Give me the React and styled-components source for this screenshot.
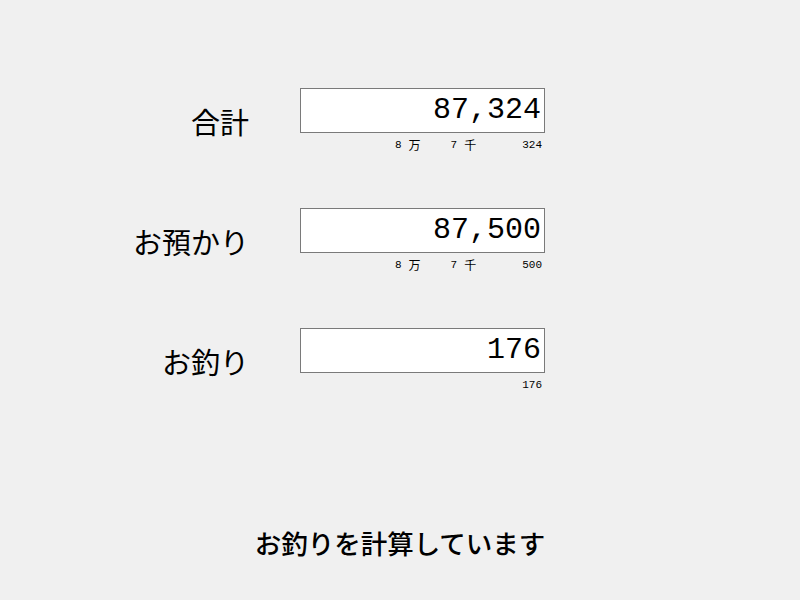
import React from "react";
import styled, { createGlobalStyle } from "styled-components";

const Global = createGlobalStyle`
  html, body { margin: 0; padding: 0; background: #f0f0f0; }
  body { width: 800px; height: 600px; overflow: hidden; font-family: "Noto Sans CJK JP", "Noto Sans", sans-serif; color: #000; }
`;

const Page = styled.div`
  width: 800px;
  height: 600px;
  display: flex;
  flex-direction: column;
  padding-top: 88px;
  box-sizing: border-box;
`;

const Form = styled.div`
  display: flex;
  flex-direction: column;
  gap: 75px;
`;

const Row = styled.div`
  display: flex;
  align-items: flex-start;
  height: 45px;
`;

const Label = styled.div`
  width: 249px;
  margin-top: 18px;
  text-align: right;
  font-family: "Noto Sans CJK JP", sans-serif;
  font-size: 29px;
  line-height: 30px;
`;

const Field = styled.div`
  margin-left: 51px;
  width: 245px;
  display: flex;
  flex-direction: column;
`;

const Box = styled.div`
  box-sizing: border-box;
  width: 245px;
  height: 45px;
  border: 1px solid #7a7a7a;
  background: #fff;
  display: flex;
  align-items: center;
  justify-content: flex-end;
  padding-right: 3px;
  font-family: "Liberation Mono", monospace;
  font-size: 30px;
  line-height: 43px;
`;

const Digits = styled.div`
  display: flex;
  justify-content: flex-end;
  align-items: center;
  margin-top: 6px;
  padding-right: 3px;
  height: 12px;
  line-height: 12px;
`;

const Unit = styled.span`
  display: flex;
  align-items: center;
  gap: 7px;
  margin-right: ${(p) => p.$after}px;
`;

const Num = styled.span`
  font-family: "Liberation Mono", monospace;
  font-size: 11px;
`;

const Kanji = styled.span`
  font-family: "Noto Sans CJK JP", sans-serif;
  font-size: 12px;
`;

const Status = styled.div`
  margin-top: auto;
  margin-bottom: 40px;
  text-align: center;
  font-family: "Noto Sans CJK JP", sans-serif;
  font-weight: 500;
  font-size: 26.5px;
  line-height: 34px;
`;

const rows = [
  { label: "合計", value: "87,324", man: "8", sen: "7", ones: "324" },
  { label: "お預かり", value: "87,500", man: "8", sen: "7", ones: "500" },
  { label: "お釣り", value: "176", ones: "176" },
];

export default function App() {
  return (
    <>
      <Global />
      <Page>
        <Form>
          {rows.map((r) => (
            <Row key={r.label}>
              <Label>{r.label}</Label>
              <Field>
                <Box>{r.value}</Box>
                <Digits>
                  {r.man && (
                    <Unit $after={30}>
                      <Num>{r.man}</Num>
                      <Kanji>万</Kanji>
                    </Unit>
                  )}
                  {r.sen && (
                    <Unit $after={46}>
                      <Num>{r.sen}</Num>
                      <Kanji>千</Kanji>
                    </Unit>
                  )}
                  <Num>{r.ones}</Num>
                </Digits>
              </Field>
            </Row>
          ))}
        </Form>
        <Status>お釣りを計算しています</Status>
      </Page>
    </>
  );
}
